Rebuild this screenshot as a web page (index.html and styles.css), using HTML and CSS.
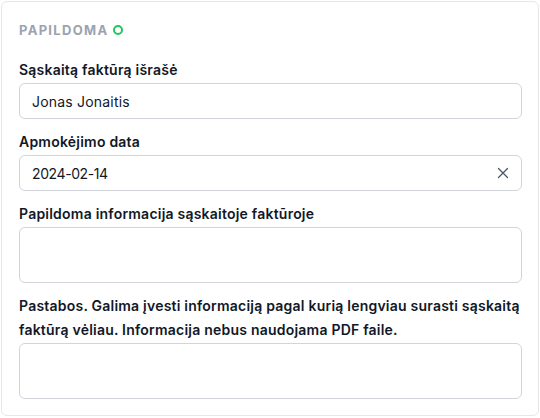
FILE: index.html
```html
<!DOCTYPE html>
<html lang="lt">
<head>
<meta charset="utf-8">
<link rel="stylesheet" href="styles.css">
</head>
<body>
<section class="card">
  <h2 class="section-title">PAPILDOMA <span class="dot"></span></h2>
  <div class="field">
    <label class="label">Sąskaitą faktūrą išrašė</label>
    <div class="input">Jonas Jonaitis</div>
  </div>
  <div class="field">
    <label class="label">Apmokėjimo data</label>
    <div class="input with-clear">
      <span class="num">2024-02-14</span>
      <svg class="clear" width="12" height="12" viewBox="0 0 12 12"><path d="M1.5 1.5 L10.5 10.5 M10.5 1.5 L1.5 10.5" stroke="#4b5563" stroke-width="1.3" stroke-linecap="round" fill="none"/></svg>
    </div>
  </div>
  <div class="field">
    <label class="label">Papildoma informacija sąskaitoje faktūroje</label>
    <div class="textarea"></div>
  </div>
  <div class="field">
    <label class="label">Pastabos. Galima įvesti informaciją pagal kurią lengviau surasti sąskaitą faktūrą vėliau. Informacija nebus naudojama PDF faile.</label>
    <div class="textarea"></div>
  </div>
</section>
</body>
</html>
```
FILE: styles.css
```css
* { box-sizing: border-box; }
html, body { margin: 0; padding: 0; background: #fff; }
body { font-family: Inter, "Noto Sans", sans-serif; color: #111827; }
.card {
  margin: 1px;
  width: 538px;
  height: 415px;
  border: 1px solid #e5e7eb;
  border-radius: 6px;
  padding: 18px 16px 0 17px;
}
.section-title {
  margin: 0 0 18px;
  font-size: 13px;
  line-height: 20px;
  font-weight: 700;
  letter-spacing: 0.1em;
  color: #9ca3af;
  display: flex;
  align-items: center;
  gap: 5px;
}
.dot {
  width: 10px; height: 10px;
  border: 2.5px solid #22c55e;
  border-radius: 50%;
  display: inline-block;
}
.field { display: flex; flex-direction: column; margin-bottom: 11px; }
.label {
  font-size: 14px;
  line-height: 24px;
  font-weight: 600;
  letter-spacing: 0.22px;
  color: #111827;
  margin-bottom: 1px;
}
.input {
  height: 36px;
  border: 1px solid #d1d5db;
  border-radius: 6px;
  padding: 0 12px;
  font-size: 14px;
  letter-spacing: 0.2px;
  display: flex;
  align-items: center;
  color: #111827;
}
.num { letter-spacing: -0.4px; }
.with-clear { justify-content: space-between; padding-right: 12px; }
.clear { display: block; }
.textarea {
  height: 56px;
  border: 1px solid #d1d5db;
  border-radius: 6px;
}
```
